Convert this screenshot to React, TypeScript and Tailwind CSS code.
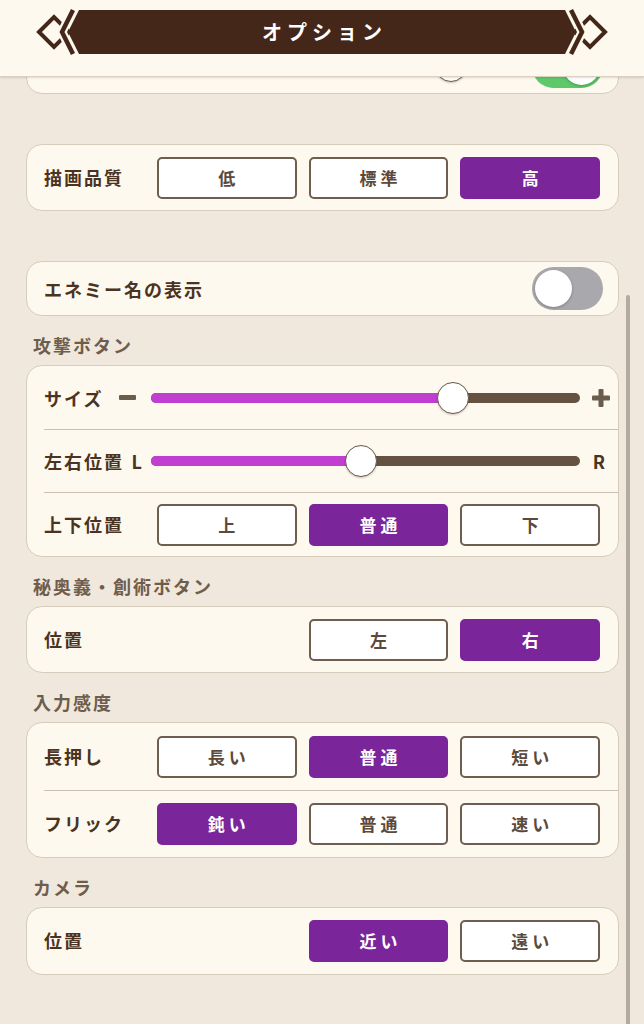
import React from 'react';

const brown = '#45271a';

function Banner() {
  return (
    <div className="relative h-[64px] flex items-center justify-center">
      <svg className="absolute inset-0" width="644" height="64" viewBox="0 0 644 64">
        {/* left ornament */}
        <polygon points="39,32 54,17 69,32 54,47" fill="none" stroke={brown} strokeWidth="4" />
        <polyline points="73,9 62,32 73,55" fill="none" stroke="#fdf9ef" strokeWidth="9" />
        <polyline points="73,10 62,32 73,54" fill="none" stroke={brown} strokeWidth="4.5" />
        {/* right ornament */}
        <polygon points="605,32 590,17 575,32 590,47" fill="none" stroke={brown} strokeWidth="4" />
        <polyline points="571,9 582,32 571,55" fill="none" stroke="#fdf9ef" strokeWidth="9" />
        <polyline points="571,10 582,32 571,54" fill="none" stroke={brown} strokeWidth="4.5" />
        {/* banner body */}
        <polygon points="79,10 565,10 576,32 565,54 79,54 68,32" fill={brown} />
      </svg>
      <span className="relative text-white text-[20px] font-bold tracking-[5px] pl-[5px] leading-none">
        オプション
      </span>
    </div>
  );
}

function Btn({ label, on }: { label: string; on?: boolean }) {
  return (
    <div
      className={`h-[42px] rounded-[5px] border-2 flex items-center justify-center text-[17px] font-bold tracking-[4px] pl-[4px] ${
        on ? 'bg-[#7b259a] border-[#7b259a] text-white' : 'bg-white border-[#6e5e50] text-[#5b4a3c]'
      }`}
    >
      {label}
    </div>
  );
}

function Toggle({ on }: { on?: boolean }) {
  return (
    <div
      className={`w-[71px] h-[43px] rounded-full p-[3px] flex ${
        on ? 'bg-[#5ec96a] justify-end' : 'bg-[#a9a8ac] justify-start'
      }`}
    >
      <div className="w-[37px] h-[37px] rounded-full bg-white shadow-[0_1px_3px_rgba(0,0,0,0.25)]" />
    </div>
  );
}

function Slider({ pct }: { pct: number }) {
  return (
    <div className="relative flex-1 h-[10px] rounded-full bg-[#655241]">
      <div className="h-full rounded-full bg-[#c03ed0]" style={{ width: pct + '%' }} />
      <div
        className="absolute top-1/2 w-[32px] h-[32px] -translate-x-1/2 -translate-y-1/2 rounded-full bg-white border-[1.5px] border-[#6b5a4b] shadow-[0_1px_2px_rgba(0,0,0,0.2)]"
        style={{ left: pct + '%' }}
      />
    </div>
  );
}

function Card({ children }: { children: React.ReactNode }) {
  return <div className="rounded-[16px] border border-[#d6ccbb] bg-[#fdf9ee] overflow-hidden">{children}</div>;
}

function Label({ children }: { children: React.ReactNode }) {
  return <span className="text-[18px] font-bold tracking-[2px] text-[#4b3322] leading-[22px]">{children}</span>;
}

function Section({ title }: { title: string }) {
  return (
    <div className="h-[49px] flex items-end pb-[9px] pl-[7px]">
      <span className="text-[18px] font-bold tracking-[2px] text-[#6e5d4d] leading-[22px]">{title}</span>
    </div>
  );
}

function SegRow({ label, items, h }: { label: string; items: { t: string; on?: boolean }[]; h: string }) {
  const offset = 3 - items.length;
  return (
    <div className={`flex items-center pl-[17px] pr-[18px] ${h}`}>
      <div className="w-[113px] shrink-0">
        <Label>{label}</Label>
      </div>
      <div className="flex-1 grid grid-cols-3 gap-[12px]">
        {offset > 0 && <div className={offset === 2 ? 'col-span-2' : ''} />}
        {items.map((it) => (
          <Btn key={it.t} label={it.t} on={it.on} />
        ))}
      </div>
    </div>
  );
}

function Divider() {
  return <div className="ml-[17px] border-t border-[#cbc1b3]" />;
}

function Minus() {
  return <div className="w-[17px] h-[5px] rounded-[1px] bg-[#6b5d4e]" />;
}

function Plus() {
  return (
    <svg width="18" height="18" viewBox="0 0 18 18">
      <rect x="6.5" y="0" width="5" height="18" rx="1" fill="#6b5d4e" />
      <rect x="0" y="6.5" width="18" height="5" rx="1" fill="#6b5d4e" />
    </svg>
  );
}

export default function App() {
  return (
    <div className="relative w-full h-[1024px] overflow-hidden bg-[#f0e8dc] font-['Noto_Sans_CJK_JP','Noto_Sans',sans-serif]">
      {/* header */}
      <header className="absolute top-0 inset-x-0 h-[77px] z-10 bg-[#fdf9ef] border-b border-[#d9d0c2] shadow-[0_1px_2px_rgba(0,0,0,0.12)]">
        <Banner />
      </header>

      {/* scrollbar */}
      <div className="absolute left-[626px] top-[295px] w-[4px] h-[740px] rounded-full bg-[#b4ab9f]" />

      <main className="pt-[38px] pl-[26px] pr-[25px]">
        <Card>
          <div className="h-[54px] flex items-center pl-[17px] pr-[15px]">
            <div className="w-[107px] shrink-0" />
            <Slider pct={84.5} />
            <div className="ml-[26px]">
              <Toggle on />
            </div>
          </div>
        </Card>

        <div className="h-[50px]" />
        <Card>
          <SegRow
            label="描画品質"
            h="h-[65px]"
            items={[{ t: '低' }, { t: '標準' }, { t: '高', on: true }]}
          />
        </Card>

        <div className="h-[50px]" />
        <Card>
          <div className="h-[53px] flex items-center justify-between pl-[17px] pr-[15px]">
            <Label>エネミー名の表示</Label>
            <Toggle />
          </div>
        </Card>

        <Section title="攻撃ボタン" />
        <Card>
          <div className="h-[63px] flex items-center pl-[17px]">
            <div className="w-[107px] shrink-0 flex items-center justify-between pr-[15px]">
              <Label>サイズ</Label>
              <Minus />
            </div>
            <Slider pct={70.4} />
            <div className="w-[38px] shrink-0 flex justify-center pl-[3px]">
              <Plus />
            </div>
          </div>
          <Divider />
          <div className="h-[62px] flex items-center pl-[17px]">
            <div className="w-[107px] shrink-0 flex items-center justify-between pr-[9px]">
              <Label>左右位置</Label>
              <span className="text-[18px] font-bold text-[#4b3322] leading-[22px]">L</span>
            </div>
            <Slider pct={49} />
            <div className="w-[38px] shrink-0 flex justify-center">
              <span className="text-[18px] font-bold text-[#4b3322] leading-[22px]">R</span>
            </div>
          </div>
          <Divider />
          <SegRow
            label="上下位置"
            h="h-[63px]"
            items={[{ t: '上' }, { t: '普通', on: true }, { t: '下' }]}
          />
        </Card>

        <Section title="秘奥義・創術ボタン" />
        <Card>
          <SegRow label="位置" h="h-[65px]" items={[{ t: '左' }, { t: '右', on: true }]} />
        </Card>

        <Section title="入力感度" />
        <Card>
          <SegRow
            label="長押し"
            h="h-[67px]"
            items={[{ t: '長い' }, { t: '普通', on: true }, { t: '短い' }]}
          />
          <Divider />
          <SegRow
            label="フリック"
            h="h-[66px]"
            items={[{ t: '鈍い', on: true }, { t: '普通' }, { t: '速い' }]}
          />
        </Card>

        <Section title="カメラ" />
        <Card>
          <SegRow label="位置" h="h-[66px]" items={[{ t: '近い', on: true }, { t: '遠い' }]} />
        </Card>
      </main>
    </div>
  );
}
